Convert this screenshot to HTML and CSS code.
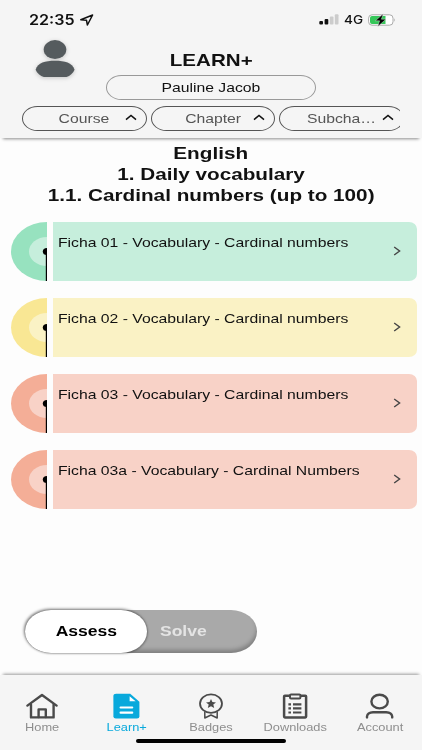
FILE: index.html
```html
<!DOCTYPE html>
<html lang="en">
<head>
  <meta charset="UTF-8">
  <meta name="viewport" content="width=device-width, initial-scale=1">
  <title>LEARN+</title>
  <link rel="stylesheet" href="styles.css">
</head>
<body>
  <header class="header">
    <div class="status-bar">
      <span class="clock">22:35</span>
      <svg class="location" width="14" height="12" viewBox="0 0 14 12"><path d="M0.8 5.7L12.6 1L7.4 11L6.5 6.3Z" fill="none" stroke="#111" stroke-width="1.5" stroke-linejoin="round"/></svg>
      <svg class="signal" width="20" height="11" viewBox="0 0 20 11">
        <rect x="0.3" y="7" width="3.7" height="3.6" rx="1" fill="#111"/>
        <rect x="5.6" y="5" width="3.7" height="5.6" rx="1" fill="#111"/>
        <rect x="10.8" y="2.6" width="3.7" height="8" rx="1" fill="#ccc"/>
        <rect x="15.8" y="0.3" width="3.7" height="10.3" rx="1" fill="#ccc"/>
      </svg>
      <span class="network">4G</span>
      <svg class="battery" width="28" height="14" viewBox="0 0 28 14">
        <rect x="0.6" y="1.8" width="24.4" height="10.4" rx="3.4" fill="#fff" stroke="#aaa"/>
        <path d="M4 3.1H17.5V10.9H4A2 2 0 0 1 2 8.9V5.1A2 2 0 0 1 4 3.1Z" fill="#35c759"/>
        <path d="M26.2 5.2Q27.8 7 26.2 8.8Z" fill="#aaa"/>
        <path d="M15.2 0.8L7.4 7.8H11.6L9.8 13.4L18 6.2H13.4Z" fill="#000" stroke="#f5f5f5" stroke-width="0.4"/>
      </svg>
    </div>

    <div class="title-row">
      <svg class="avatar" width="42" height="40" viewBox="0 0 42 40">
        <ellipse cx="21" cy="11.6" rx="11.3" ry="9.5" fill="#555b5e"/>
        <path d="M1.6 31.8C4 24.5 11 22.8 21 22.8S38 24.5 40.6 31.8C39 35.5 36 38 32.5 39H9.8C6.3 38 3 35.5 1.6 31.8Z" fill="#555b5e"/>
      </svg>
      <div class="title-block">
        <h1 class="title"><span class="wide">LEARN+</span></h1>
        <div class="user-name"><span class="wide">Pauline Jacob</span></div>
      </div>
    </div>

    <div class="filters">
      <div class="filter">
        <span class="wide">Course</span>
        <svg class="chevron" width="12" height="7" viewBox="0 0 12 7"><path d="M1 5.6L6 1.4L11 5.6"/></svg>
      </div>
      <div class="filter">
        <span class="wide">Chapter</span>
        <svg class="chevron" width="12" height="7" viewBox="0 0 12 7"><path d="M1 5.6L6 1.4L11 5.6"/></svg>
      </div>
      <div class="filter">
        <span class="wide">Subcha…</span>
        <svg class="chevron" width="12" height="7" viewBox="0 0 12 7"><path d="M1 5.6L6 1.4L11 5.6"/></svg>
      </div>
    </div>
  </header>

  <main class="content">
    <h2 class="topic">
      <span class="wide">English</span>
      <span class="wide">1. Daily vocabulary</span>
      <span class="wide">1.1. Cardinal numbers (up to 100)</span>
    </h2>

    <div class="list">
      <div class="item green">
        <svg class="dial" width="36" height="59" viewBox="0 0 36 59">
          <ellipse class="outer" cx="36" cy="29.5" rx="36" ry="29.5"/>
          <ellipse class="inner" cx="36" cy="29.5" rx="18" ry="14.5"/>
          <ellipse cx="36" cy="29.5" rx="4.2" ry="3.5"/>
          <rect x="34.8" y="29.5" width="1.2" height="29.5"/>
        </svg>
        <div class="card">
          <span class="wide">Ficha 01 - Vocabulary - Cardinal numbers</span>
          <svg class="arrow" width="8" height="10" viewBox="0 0 8 10"><path d="M1.2 1L6.6 5L1.2 9"/></svg>
        </div>
      </div>
      <div class="item yellow">
        <svg class="dial" width="36" height="59" viewBox="0 0 36 59">
          <ellipse class="outer" cx="36" cy="29.5" rx="36" ry="29.5"/>
          <ellipse class="inner" cx="36" cy="29.5" rx="18" ry="14.5"/>
          <ellipse cx="36" cy="29.5" rx="4.2" ry="3.5"/>
          <rect x="34.8" y="29.5" width="1.2" height="29.5"/>
        </svg>
        <div class="card">
          <span class="wide">Ficha 02 - Vocabulary - Cardinal numbers</span>
          <svg class="arrow" width="8" height="10" viewBox="0 0 8 10"><path d="M1.2 1L6.6 5L1.2 9"/></svg>
        </div>
      </div>
      <div class="item red">
        <svg class="dial" width="36" height="59" viewBox="0 0 36 59">
          <ellipse class="outer" cx="36" cy="29.5" rx="36" ry="29.5"/>
          <ellipse class="inner" cx="36" cy="29.5" rx="18" ry="14.5"/>
          <ellipse cx="36" cy="29.5" rx="4.2" ry="3.5"/>
          <rect x="34.8" y="29.5" width="1.2" height="29.5"/>
        </svg>
        <div class="card">
          <span class="wide">Ficha 03 - Vocabulary - Cardinal numbers</span>
          <svg class="arrow" width="8" height="10" viewBox="0 0 8 10"><path d="M1.2 1L6.6 5L1.2 9"/></svg>
        </div>
      </div>
      <div class="item red">
        <svg class="dial" width="36" height="59" viewBox="0 0 36 59">
          <ellipse class="outer" cx="36" cy="29.5" rx="36" ry="29.5"/>
          <ellipse class="inner" cx="36" cy="29.5" rx="18" ry="14.5"/>
          <ellipse cx="36" cy="29.5" rx="4.2" ry="3.5"/>
          <rect x="34.8" y="29.5" width="1.2" height="29.5"/>
        </svg>
        <div class="card">
          <span class="wide">Ficha 03a - Vocabulary - Cardinal Numbers</span>
          <svg class="arrow" width="8" height="10" viewBox="0 0 8 10"><path d="M1.2 1L6.6 5L1.2 9"/></svg>
        </div>
      </div>
    </div>

    <div class="switch">
      <div class="switch-option active"><span class="wide">Assess</span></div>
      <div class="switch-option"><span class="wide">Solve</span></div>
    </div>
  </main>

  <nav class="tab-bar">
    <div class="tab">
      <svg width="34" height="26" viewBox="0 0 34 26" fill="none" stroke="#4a4a4a" stroke-width="2.4" stroke-linecap="round" stroke-linejoin="round">
        <path d="M2.4 12.6L17 2L31.6 12.6"/>
        <path d="M6 11.5V24.4H28.6V11.5"/>
        <path d="M13.6 24V16.4H20.8V24"/>
      </svg>
      <span class="wide">Home</span>
    </div>
    <div class="tab active">
      <svg width="34" height="26" viewBox="0 0 34 26">
        <path d="M6.2 0.8H20.2L29.4 8.8V23.5Q29.4 25.4 27 25.4H5.8Q3.4 25.4 3.4 23.5V3Q3.4 0.8 6.2 0.8Z" fill="#08a9dc"/>
        <path d="M19.6 3.2V8.2H25.6Z" fill="#fff"/>
        <path d="M10.6 14.5H22.2M10.6 19.7H22.2" stroke="#fff" stroke-width="2.2" stroke-linecap="round"/>
      </svg>
      <span class="wide">Learn+</span>
    </div>
    <div class="tab">
      <svg width="34" height="26" viewBox="0 0 34 26" fill="none" stroke="#4a4a4a" stroke-width="1.8" stroke-linejoin="round">
        <ellipse cx="17" cy="10.6" rx="11" ry="9.2"/>
        <path d="M17 6L18.4 9L22 9.4L19.3 11.6L20.2 15L17 13.3L13.8 15L14.7 11.6L12 9.4L15.6 9Z" fill="#4a4a4a" stroke="none"/>
        <path d="M10.8 18.4V25L17 22L23.2 25V18.4" stroke-width="1.5"/>
      </svg>
      <span class="wide">Badges</span>
    </div>
    <div class="tab">
      <svg width="34" height="26" viewBox="0 0 34 26" fill="none" stroke="#4a4a4a" stroke-width="2.5" stroke-linejoin="round">
        <rect x="6.1" y="2.7" width="22" height="21.7" rx="0.8"/>
        <rect x="12" y="1.6" width="10.4" height="3.8" rx="1" fill="#f5f5f5" stroke-width="2"/>
        <path d="M10.4 11.3H13M10.4 15.4H13M10.4 19.5H13M15 11.3H23.4M15 15.4H23.4M15 19.5H23.4" stroke-width="2.2"/>
      </svg>
      <span class="wide">Downloads</span>
    </div>
    <div class="tab">
      <svg width="34" height="26" viewBox="0 0 34 26" fill="none" stroke="#4a4a4a" stroke-width="2.4" stroke-linecap="round">
        <ellipse cx="16.6" cy="8.6" rx="8.2" ry="6.8"/>
        <path d="M4 24.4V23.4Q4.6 19.5 10 19.3H23.2Q28.6 19.5 29.2 23.4V24.4"/>
      </svg>
      <span class="wide">Account</span>
    </div>
    <div class="home-indicator"></div>
  </nav>
</body>
</html>
```

FILE: styles.css
```css
* {
  box-sizing: border-box;
}
body {
  margin: 0;
  width: 422px;
  height: 750px;
  display: flex;
  flex-direction: column;
  overflow: hidden;
  background-color: #fdfdfd;
  font-family: "Liberation Sans", Arial, sans-serif;
  color: #111;
}
svg {
  display: block;
  flex: none;
}
/* extended letterforms */
.wide {
  display: inline-block;
  white-space: nowrap;
  transform: scaleX(1.21);
}

/* Header */
.header {
  height: 138px;
  background-color: #f5f5f5;
  box-shadow: 0 4px 3px -3px rgba(0, 0, 0, 0.45);
}
.status-bar {
  display: flex;
  align-items: center;
  height: 39px;
  padding: 0 26px 0 29px;
}
.clock {
  width: 51px;
  font-family: Inter, sans-serif;
  font-size: 14.5px;
  font-weight: 600;
  transform: scaleX(1.11);
  transform-origin: left;
}
.signal {
  margin-left: auto;
}
.network {
  width: 24px;
  margin-left: 5px;
  font-family: Inter, sans-serif;
  font-size: 12px;
  font-weight: 500;
  transform: scaleX(1.13);
  transform-origin: left;
}
.title-row {
  display: flex;
  height: 61px;
}
.avatar {
  margin: -1px 0 0 34px;
  filter: drop-shadow(0 1px 2px rgba(0, 0, 0, 0.2));
}
.title-block {
  width: 210px;
  margin-left: 30px;
  padding-top: 11px;
  text-align: center;
}
.title {
  margin: 0 0 4px;
  font-size: 17px;
  line-height: 21px;
}
.user-name {
  height: 25px;
  border: 1px solid #999;
  border-radius: 16px / 13px;
  font-size: 13px;
  line-height: 24px;
}
.filters {
  display: flex;
  gap: 4px;
  width: 378px;
  margin: 6px 0 0 22px;
  overflow: hidden;
}
.filter {
  display: flex;
  align-items: center;
  justify-content: center;
  position: relative;
  flex: none;
  width: 124.5px;
  height: 25px;
  border: 1px solid #555;
  border-radius: 16px / 13px;
  font-size: 13px;
  color: #555;
}
.chevron {
  position: absolute;
  top: 7px;
  right: 9px;
  fill: none;
  stroke: #111;
  stroke-width: 1.5;
}

/* Content */
.content {
  flex: 1;
}
.topic {
  display: flex;
  flex-direction: column;
  align-items: center;
  margin: 5px 0 15.5px;
  font-size: 17px;
  line-height: 21px;
}
.topic .wide {
  transform: scaleX(1.218);
}
.list {
  display: flex;
  flex-direction: column;
  gap: 17px;
  padding: 0 5px 0 11px;
}
.item {
  display: flex;
  gap: 6px;
  height: 59px;
}
.card {
  display: flex;
  flex: 1;
  justify-content: space-between;
  padding: 13.5px 16px 0 5px;
  border-radius: 0 8px 8px 0 / 0 7px 7px 0;
  font-size: 13px;
  line-height: 15px;
}
.card .wide {
  transform-origin: left;
}
.arrow {
  margin-top: 11px;
  fill: none;
  stroke: #444;
  stroke-width: 1.4;
}
.green .card {
  background-color: #c6eedc;
}
.green .outer {
  fill: #97e2bf;
}
.green .inner {
  fill: #c6eedc;
}
.yellow .card {
  background-color: #faf2c5;
}
.yellow .outer {
  fill: #f9e794;
}
.yellow .inner {
  fill: #faf2c5;
}
.red .card {
  background-color: #f8d2c7;
}
.red .outer {
  fill: #f4ae97;
}
.red .inner {
  fill: #f8d2c7;
}

/* Assess / Solve switch */
.switch {
  display: flex;
  width: 232px;
  height: 43px;
  margin: 101px 0 0 25px;
  border-radius: 26px / 21.5px;
  background-color: #a9a9a9;
  box-shadow: inset -1px -4px 4px -1px rgba(0, 0, 0, 0.25);
  font-size: 14.5px;
  font-weight: bold;
  line-height: 42px;
  text-align: center;
}
.switch-option {
  width: 73px;
  color: #e4e4e4;
}
.switch-option.active {
  width: 122px;
  border-radius: 26px / 21.5px;
  background-color: #fff;
  color: #000;
  box-shadow: -1px -1px 3px rgba(0, 0, 0, 0.55), 1px 1px 2px rgba(0, 0, 0, 0.25);
}

/* Bottom navigation */
.tab-bar {
  display: flex;
  position: relative;
  height: 75px;
  padding-top: 18px;
  background-color: #f5f5f5;
  box-shadow: 0 -4px 3px -3px rgba(0, 0, 0, 0.4);
}
.tab {
  display: flex;
  flex: 1;
  flex-direction: column;
  align-items: center;
  font-size: 10.6px;
  line-height: 16px;
  color: #8e8e8e;
}
.tab.active {
  color: #08a9dc;
}
.home-indicator {
  position: absolute;
  bottom: 7px;
  left: 136px;
  width: 150px;
  height: 4px;
  border-radius: 2px;
  background-color: #000;
}
```
